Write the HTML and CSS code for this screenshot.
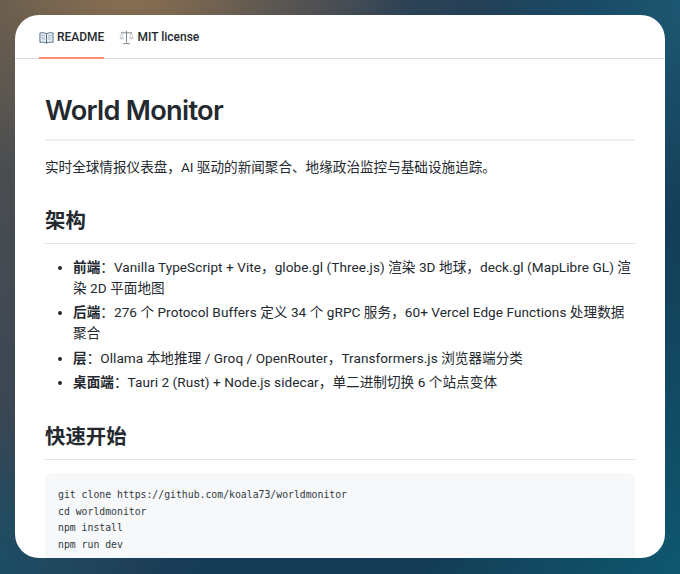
FILE: index.html
```html
<!DOCTYPE html>
<html lang="zh-CN">
<head>
  <meta charset="UTF-8">
  <title>World Monitor</title>
  <link rel="stylesheet" href="styles.css">
</head>
<body>

  <div class="readme-card">
    <nav class="tabs">
      <a class="tab active">
        <svg class="tab-icon" viewBox="0 0 16 16" width="15" height="15">
          <path d="M1 3.2c2.400-.6 4.700-.4 7 .8v10c-2.300-1.100-4.600-1.300-7-.8z" fill="#eef2f5" stroke="#4a6a85" stroke-width="1"/>
          <path d="M15 3.2c-2.400-.6-4.700-.4-7 .8v10c2.300-1.100 4.600-1.300 7-.8z" fill="#eef2f5" stroke="#4a6a85" stroke-width="1"/>
          <path d="M2.500 5.500c1.300-.1 2.500.1 4 .6M2.500 7.500c1.300-.1 2.500.1 4 .6M2.500 9.500c1.300-.1 2.500.1 4 .6M13.500 5.500c-1.300-.1-2.500.1-4 .6M13.500 7.500c-1.300-.1-2.500.1-4 .6M13.500 9.500c-1.300-.1-2.500.1-4 .6" fill="none" stroke="#8a9aa8" stroke-width=".7"/>
        </svg>
        README
      </a>
      <a class="tab">
        <svg class="tab-icon" viewBox="0 0 16 16" width="15" height="15">
          <path d="M8 1v12.500M2 3h12M4.500 14.500h7" fill="none" stroke="#7b8086" stroke-width="1"/>
          <path d="M2.800 3.300 1 8.500h3.600zM13.200 3.300l-1.800 5.200H15z" fill="none" stroke="#a4a9ae" stroke-width=".6"/>
          <path d="M.6 8.500c.5 2 3.900 2 4.400 0zM11 8.500c.5 2 3.900 2 4.400 0z" fill="#c4c8cc"/>
        </svg>
        MIT license
      </a>
    </nav>

    <article class="markdown">
      <h1>World Monitor</h1>
      <p>实时全球情报仪表盘，AI 驱动的新闻聚合、地缘政治监控与基础设施追踪。</p>

      <h2>架构</h2>
      <ul>
        <li><strong>前端</strong>：Vanilla TypeScript + Vite，globe.gl (Three.js) 渲染 3D 地球，deck.gl (MapLibre GL) 渲染 2D 平面地图</li>
        <li><strong>后端</strong>：276 个 Protocol Buffers 定义 34 个 gRPC 服务，60+ Vercel Edge Functions 处理数据聚合</li>
        <li><strong>层</strong>：Ollama 本地推理 / Groq / OpenRouter，Transformers.js 浏览器端分类</li>
        <li><strong>桌面端</strong>：Tauri 2 (Rust) + Node.js sidecar，单二进制切换 6 个站点变体</li>
      </ul>

      <h2 class="spaced">快速开始</h2>
      <pre><code>git clone https://github.com/koala73/worldmonitor
cd worldmonitor
npm install
npm run dev
</code></pre>
    </article>
  </div>

</body>
</html>
```

FILE: styles.css
```css
* {
  box-sizing: border-box;
}

html,
body {
  height: 100%;
}

body {
  margin: 0;
  padding: 15px 15px 16px;
  overflow: hidden;
  font-family: Roboto, "Noto Sans CJK SC", sans-serif;
  color: #24292f;
  background:
    radial-gradient(ellipse 280px 210px at 130px -20px, rgba(150, 118, 80, 0.9), rgba(120, 100, 80, 0.5) 55%, rgba(90, 85, 80, 0) 100%),
    radial-gradient(circle 230px at 700px 0, rgba(30, 92, 118, 0.9), rgba(30, 92, 118, 0)),
    radial-gradient(circle 160px at -20px 574px, rgba(20, 82, 108, 0.8), rgba(20, 82, 108, 0)),
    linear-gradient(125deg, #54524e 0%, #3a4654 28%, #163c58 55%, #143c55 75%, #0e586f 100%);
}

.readme-card {
  height: 100%;
  background: white;
  border-radius: 24px;
  overflow: hidden;
}

.tabs {
  display: flex;
  gap: 15px;
  height: 44px;
  padding-left: 24px;
  border-bottom: 1px solid #d8dee4;
}

.tab {
  display: flex;
  align-items: center;
  gap: 3px;
  height: 44px;
  padding-top: 2px;
  font-size: 12px;
  font-weight: 500;
  border-bottom: 2px solid transparent;
}

.tab.active {
  border-bottom-color: #fd8c73;
}

.markdown {
  padding: 0 30px;
}

h1 {
  margin: 0;
  padding: 34px 0 10px;
  font-family: Inter, "Noto Sans CJK SC", sans-serif;
  font-size: 27.2px;
  letter-spacing: -0.7px;
  line-height: 36px;
  font-weight: 600;
  border-bottom: 2px solid #eceef0;
}

p {
  margin: 15px 0 0;
  font-size: 13.6px;
  line-height: 22px;
}

h2 {
  margin: 29px 0 0;
  padding-bottom: 8px;
  font-size: 20.4px;
  line-height: 28px;
  font-weight: 600;
  border-bottom: 1px solid #dfe3e7;
}

h2.spaced {
  margin-top: 30px;
}

ul {
  margin: 13px 0 0;
  padding-left: 28px;
  font-size: 13.6px;
  line-height: 21px;
  letter-spacing: 0.05px;
}

li {
  margin-bottom: 3.4px;
}

strong {
  font-weight: 600;
}

pre {
  margin: 13px 0 0;
  padding: 14px 13px;
  height: 120px;
  font-family: "DejaVu Sans Mono", monospace;
  font-size: 9.8px;
  line-height: 16.5px;
  color: #33393f;
  background: #f6f8fa;
  border-radius: 6px;
}
```
